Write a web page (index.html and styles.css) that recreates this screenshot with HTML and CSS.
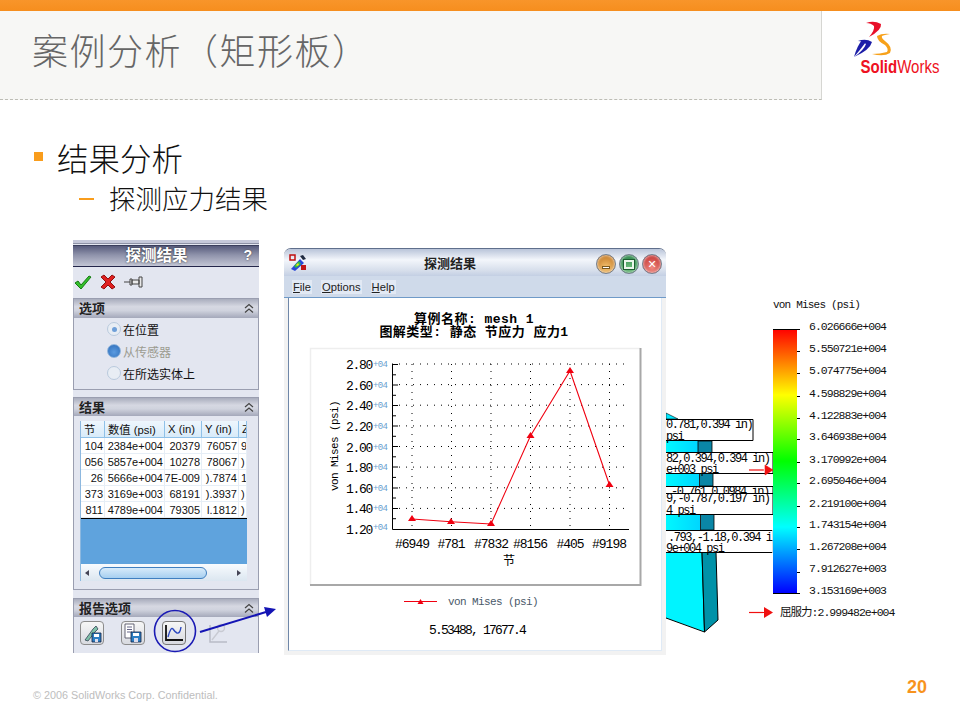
FILE: index.html
```html
<!DOCTYPE html>
<html lang="zh">
<head>
<meta charset="utf-8">
<title>案例分析（矩形板）</title>
<link rel="stylesheet" href="styles.css">
</head>
<body>
<div class="slide">
  <div class="topbar"></div>
  <header class="head">
    <div class="titleband"><h1>案例分析（矩形板）</h1></div>
    <div class="logo">
      <svg width="138" height="88" viewBox="822 11 138 88">
        <path d="M866 23 Q874 20 881 24 Q882 30 869 37 Q875 30 874 26 Q871 23 866 23Z" fill="#e8102a"/>
        <path d="M858 41 Q866 38 872 42 Q870 50 854 57 Q864 50 866 44 Q863 41 858 41Z" fill="#1c1ea8"/>
        <path d="M854 57 Q857 46 862 40 L866 42 Q860 50 854 57Z" fill="#1c1ea8"/>
        <path d="M890 34 Q882 33 877 36 Q877 41 885 45 Q889 49 887 52 Q880 54 872 54 Q884 57 890 53 Q893 47 885 41 Q881 38 882 36 Q884 35 890 34Z" fill="#f7a11a"/>
        <text class="logo-text" x="860.500" y="73" textLength="79" lengthAdjust="spacingAndGlyphs"><tspan class="logo-solid">Solid</tspan>Works</text>
      </svg>
    </div>
  </header>
  <section class="bullets">
    <p class="lvl1"><span class="sq"></span>结果分析</p>
    <p class="lvl2"><span class="dash"></span>探测应力结果</p>
  </section>

  <section class="stage">
    <aside class="panel">
      <div class="tabs"></div>
      <div class="pm-title"><span class="pm-name">探测结果</span><span class="pm-help">?</span></div>
      <div class="pm-actions">
        <svg width="18" height="16" viewBox="0 0 18 16"><path d="M1 9 L4 7 L7 11 L15 2 L17 3 L7 15Z" fill="#35c02c" stroke="#157a12" stroke-width="1"/></svg>
        <svg width="16" height="16" viewBox="0 0 16 16"><path d="M1 3 L4 1 L8 5 L12 1 L15 3 L10 8 L15 13 L12 15 L8 11 L4 15 L1 13 L6 8Z" fill="#e02020" stroke="#901010" stroke-width="1"/></svg>
        <svg class="pin" width="20" height="14" viewBox="0 0 20 14"><path d="M0 7H6M6 4H8V10H6ZM8 5H15V9H8ZM15 2H18V12H15Z" fill="#e9e9e9" stroke="#444" stroke-width="1"/></svg>
      </div>

      <div class="group group-options">
        <div class="group-head"><span>选项</span><svg class="chev" width="10" height="11" viewBox="0 0 10 11"><path d="M1 5 L5 1.500 L9 5M1 9.500 L5 6 L9 9.500" fill="none" stroke="#444" stroke-width="1.200"/></svg></div>
        <div class="radios">
          <div class="radio"><span class="dot dot-on"></span>在位置</div>
          <div class="radio radio-off"><span class="dot dot-blue"></span>从传感器</div>
          <div class="radio"><span class="dot"></span>在所选实体上</div>
        </div>
      </div>

      <div class="group group-results">
        <div class="group-head"><span>结果</span><svg class="chev" width="10" height="11" viewBox="0 0 10 11"><path d="M1 5 L5 1.500 L9 5M1 9.500 L5 6 L9 9.500" fill="none" stroke="#444" stroke-width="1.200"/></svg></div>
        <div class="tbl">
          <div class="grid">
            <div class="th th-c">节</div><div class="th th-l">数值 (psi)</div><div class="th th-l">X (in)</div><div class="th th-l">Y (in)</div><div class="th th-l">Z</div>
            <div class="td">104</div><div class="td">2384e+004</div><div class="td">20379</div><div class="td">76057</div><div class="td td-l">9</div>
            <div class="td">056</div><div class="td">5857e+004</div><div class="td">10278</div><div class="td">78067</div><div class="td td-l">)</div>
            <div class="td">26</div><div class="td">5666e+004</div><div class="td">7E-009</div><div class="td">).7874</div><div class="td td-l">1</div>
            <div class="td">373</div><div class="td">3169e+003</div><div class="td">68191</div><div class="td">).3937</div><div class="td td-l">)</div>
            <div class="td">811</div><div class="td">4789e+004</div><div class="td">79305</div><div class="td">l.1812</div><div class="td td-l">)</div>
          </div>
          <div class="tbl-empty"></div>
          <div class="scroll">
            <span class="arrow-l"></span>
            <span class="thumb"></span>
            <span class="arrow-r"></span>
          </div>
        </div>
      </div>

      <div class="group group-report">
        <div class="group-head"><span>报告选项</span><svg class="chev" width="10" height="11" viewBox="0 0 10 11"><path d="M1 5 L5 1.500 L9 5M1 9.500 L5 6 L9 9.500" fill="none" stroke="#444" stroke-width="1.200"/></svg></div>
        <div class="report-btns">
          <button class="tool"><svg width="20" height="20" viewBox="0 0 20 20"><path d="M3 17 L11 6 L14 3 L16 6 L13 9 L6 18Z" fill="#7fc0a8" stroke="#345" stroke-width=".8"/><path d="M10 10H19V19H10Z" fill="#2c7fc4" stroke="#124" stroke-width=".8"/><path d="M12 11H17V14H12Z" fill="#fff"/><path d="M13 16H16V19H13Z" fill="#dde"/></svg></button>
          <button class="tool"><svg width="20" height="20" viewBox="0 0 20 20"><path d="M2 1H11V15H2Z" fill="#fff" stroke="#556" stroke-width=".9"/><path d="M4 4H9M4 6.500H9M4 9H9" stroke="#668" stroke-width="1"/><path d="M8 9H18V19H8Z" fill="#2c7fc4" stroke="#124" stroke-width=".8"/><path d="M10 10H16V13H10Z" fill="#fff"/><path d="M11 15H15V19H11Z" fill="#dde"/></svg></button>
          <button class="tool tool-on"><svg width="20" height="20" viewBox="0 0 20 20"><path d="M2 2V17H19" fill="none" stroke="#111" stroke-width="1.800"/><path d="M4 14 Q7 3 9 6 T13 10 Q16 11 17 4" fill="none" stroke="#2d49c0" stroke-width="1.400"/></svg></button>
          <svg class="tool-dim" width="20" height="22" viewBox="0 0 20 22"><path d="M2 3V20H19" fill="none" stroke="#b9bcc6" stroke-width="1.500"/><path d="M4 18 L11 9" stroke="#c8cad2" stroke-width="1.400"/><circle cx="13" cy="6" r="3.500" fill="none" stroke="#c8cad2" stroke-width="1.400"/></svg>
        </div>
      </div>
    </aside>

    <svg class="callout" width="290" height="440" viewBox="0 240 290 440">
      <circle cx="175" cy="631" r="20.500" fill="none" stroke="#1a1ab4" stroke-width="1.600"/>
      <path d="M200 632 L266 612" stroke="#1414b4" stroke-width="2"/>
      <path d="M276 609 L264 607 L267 617Z" fill="#1414b4"/>
    </svg>

    <article class="win">
      <div class="win-title">
        <svg class="win-icon" width="18" height="18" viewBox="0 0 18 18"><rect x="1" y="1" width="5" height="5" fill="none" stroke="#c01010" stroke-width="1.500"/><path d="M2 15 L11 5 L15 9 L6 17Z" fill="#2a48d8"/><path d="M5 12 L10 7 L12 10 L7 14Z" fill="#30c040"/><path d="M7 11 L9 9 L10 11 L8 12Z" fill="#f0e020"/><path d="M11 2 L14 1 L17 5 L14 6Z" fill="#202a40"/><rect x="12" y="11" width="5" height="5" fill="#c01818"/></svg>
        <span class="win-name">探测结果</span>
        <div class="win-btns">
          <span class="wb wb-min"><i></i></span>
          <span class="wb wb-max"><i></i></span>
          <span class="wb wb-close"><i>✕</i></span>
        </div>
      </div>
      <nav class="win-menu">
        <span><u>F</u>ile</span><span><u>O</u>ptions</span><span><u>H</u>elp</span>
      </nav>
      <div class="win-body">
        <svg width="373" height="352" viewBox="289 299 373 352">
          <text class="t-title" x="474" y="323.500" text-anchor="middle">算例名称: mesh 1</text>
          <text class="t-title" x="474" y="337" text-anchor="middle">图解类型: 静态 节应力 应力1</text>
          <path d="M310.500 586V349.500H640" fill="none" stroke="#eee" stroke-width="1.500"/>
          <path d="M640.500 349V586H310" fill="none" stroke="#a8a8a8" stroke-width="2"/>
          <g class="grid-dots">
            <path d="M392 365H628M392 385.600H628M392 406.200H628M392 426.900H628M392 447.500H628M392 468.100H628M392 488.800H628M392 509.400H628"/>
            <path d="M412 365V530M451.500 365V530M491 365V530M530.500 365V530M570 365V530M609.500 365V530"/>
          </g>
          <path d="M392.500 365V530.500H629" fill="none" stroke="#000"/>
          <path d="M392 365.500H398M392 375.800H396M392 386H398M392 396.300H396M392 406.500H398M392 416.800H396M392 427H398M392 437.300H396M392 447.500H398M392 457.800H396M392 468H398M392 478.400H396M392 489H398M392 499H396M392 509.500H398M392 519.700H396" stroke="#000"/>
          <g class="t-y">
            <text x="346" y="370">2.80</text><text x="346" y="390.600">2.60</text><text x="346" y="411.200">2.40</text><text x="346" y="431.900">2.20</text><text x="346" y="452.500">2.00</text><text x="346" y="473.100">1.80</text><text x="346" y="493.800">1.60</text><text x="346" y="514.400">1.40</text><text x="346" y="535">1.20</text>
          </g>
          <g class="t-exp">
            <text x="373" y="368">+04</text><text x="373" y="388.600">+04</text><text x="373" y="409.200">+04</text><text x="373" y="429.900">+04</text><text x="373" y="450.500">+04</text><text x="373" y="471.100">+04</text><text x="373" y="491.800">+04</text><text x="373" y="512.400">+04</text><text x="373" y="531">+04</text>
          </g>
          <g class="t-x" text-anchor="middle">
            <text x="412" y="549">#6949</text><text x="451" y="549">#781</text><text x="491" y="549">#7832</text><text x="530" y="549">#8156</text><text x="570" y="549">#405</text><text x="609" y="549">#9198</text>
          </g>
          <text class="t-cjk" x="509" y="566" text-anchor="middle">节</text>
          <text class="t-ylab" transform="translate(338 492) rotate(-90)">von Mises (psi)</text>
          <path d="M412 520 L451 522.700 L491 525 L530.500 436.700 L570 371.700 L609.500 486" fill="none" stroke="#f00010" stroke-width="1.100"/>
          <g fill="#f00010">
            <path d="M412 516L416 522H408Z"/><path d="M451 519L455 525H447Z"/><path d="M491 521L495 527H487Z"/><path d="M530.500 433L534.500 439H526.500Z"/><path d="M570 368L574 374H566Z"/><path d="M609.500 482L613.500 488H605.500Z"/>
          </g>
          <path d="M404 602.500H437" stroke="#f00010" stroke-width="1.200"/>
          <path d="M420.500 600L423.500 605H417.500Z" fill="#f00010"/>
          <text class="t-leg" x="448" y="606">von Mises (psi)</text>
          <text class="t-read" x="429" y="635">5.53488, 17677.4</text>
        </svg>
      </div>
    </article>

    <svg class="model" width="234" height="350" viewBox="666 290 234 350">
      <defs>
        <linearGradient id="cy" x1="0" x2="1" y1="0" y2="0"><stop offset="0" stop-color="#00f8ff"/><stop offset="1" stop-color="#00d6ff"/></linearGradient>
        <linearGradient id="bar" x1="0" x2="0" y1="0" y2="1">
          <stop offset="0" stop-color="#ff0000"/><stop offset=".25" stop-color="#ffff00"/><stop offset=".5" stop-color="#00ff00"/><stop offset=".75" stop-color="#00ffff"/><stop offset="1" stop-color="#0000ff"/>
        </linearGradient>
      </defs>
      <path d="M666 413L678 419H666Z" fill="#00e8ff" stroke="#000" stroke-width=".6"/>
      <rect x="666" y="441" width="32" height="12" fill="url(#cy)"/><path d="M698 441H712V453H698Z" fill="#0a86a6" stroke="#000" stroke-width=".8"/>
      <rect x="666" y="473" width="33" height="13" fill="url(#cy)"/><path d="M699.500 473H713V486H699.500Z" fill="#0a86a6" stroke="#000" stroke-width=".8"/>
      <rect x="666" y="514" width="34" height="16" fill="url(#cy)"/><path d="M700.500 514H714V530H700.500Z" fill="#0a86a6" stroke="#000" stroke-width=".8"/>
      <path d="M666 552H702L705 632L666 618Z" fill="#00f4ff"/>
      <path d="M666 618L704.500 632L702 552" fill="none" stroke="#000" stroke-width="1"/>
      <path d="M702 552H716L718 620L704.500 632Z" fill="#0092a8" stroke="#000" stroke-width="1"/>

      <g class="lab-box">
        <path d="M666 419.500H753V440.500H666"/>
        <path d="M666 452.500H773V473.500H666"/>
        <path d="M666 486.500H773V494H666"/>
      </g>
      <g class="t-lab"><text x="671" y="495">-0.761,0.0984 in)</text></g>
      <g class="lab-box">
        <path d="M666 493.500H773V514.500H666"/>
        <path d="M666 530.500H773V552.500H666"/>
      </g>
      <path d="M773 530V553" stroke="#fff" stroke-width="1.500"/>
      <g class="t-lab">
        <text x="666" y="428">0.781,0.394 in)</text><text x="666" y="440">psi</text>
        <text x="666" y="462">82,0.394,0.394 in)</text><text x="666" y="473">e+003 psi</text>
        <text x="666" y="502">9,-0.787,0.197 in)</text><text x="666" y="514">4 psi</text>
        <text x="668" y="541">.793,-1.18,0.394 i</text><text x="666" y="552">9e+004 psi</text>
      </g>
      <path d="M749 470H764" stroke="#f01010" stroke-width="1.200"/><path d="M765 465L773 470L765 475Z" fill="#f01010" stroke="#f01010" stroke-width=".6"/>

      <text class="t-leg2" x="773" y="308">von Mises (psi)</text>
      <rect x="773" y="329" width="24" height="264" fill="url(#bar)"/>
      <path d="M773 329.500H800M773 593.500H800M797 351.500H800M797 373.500H800M797 396.500H800M797 418.500H800M797 439.500H800M797 462.500H800M797 483.500H800M797 506.500H800M797 527.500H800M797 549.500H800M797 572.500H800" stroke="#000"/>
      <g class="t-scale">
        <text x="809" y="330">6.026666e+004</text><text x="809" y="352">5.550721e+004</text><text x="809" y="374">5.074775e+004</text><text x="809" y="397">4.598829e+004</text><text x="809" y="419">4.122883e+004</text><text x="809" y="440">3.646938e+004</text><text x="809" y="463">3.170992e+004</text><text x="809" y="484">2.695046e+004</text><text x="809" y="507">2.219100e+004</text><text x="809" y="528">1.743154e+004</text><text x="809" y="550">1.267208e+004</text><text x="809" y="572">7.912627e+003</text><text x="809" y="594">3.153169e+003</text>
      </g>
      <path d="M749 612.500H764" stroke="#f01010" stroke-width="1.200"/><path d="M764 607L773 612.500L764 618Z" fill="#f01010"/>
      <text class="t-yield" x="780" y="616">屈服力:2.999482e+004</text>
    </svg>
  </section>

  <footer class="foot">
    <span class="copy">© 2006 SolidWorks Corp. Confidential.</span>
    <span class="page">20</span>
  </footer>
</div>
</body>
</html>
```

FILE: styles.css
```css
* { box-sizing: border-box; }
html, body { margin: 0; padding: 0; background: #fff; }
.slide {
  width: 960px; height: 720px; overflow: hidden; position: relative;
  font-family: "Noto Sans CJK SC", "Liberation Sans", sans-serif; background: #fff;
}
.topbar { height: 11px; background: linear-gradient(#f8952a, #f68e1e); }
.head { display: flex; height: 89px; }
.titleband {
  width: 822px; background: #f7f7f5; border-right: 1px solid #d6d6d2;
  border-bottom: 1px dashed #bdbdb5; padding-left: 32px;
}
.titleband h1 {
  margin: 0; font-size: 36px; font-weight: 300; color: #666; line-height: 77px;
  letter-spacing: 1.500px; white-space: nowrap; text-spacing-trim: space-all;
}
.logo { width: 138px; height: 88px; }
.logo svg { display: block; }
.logo-text { font: 19px "Liberation Sans", sans-serif; fill: #ee1122; }
.logo-solid { font-weight: 700; }

.bullets { height: 140px; padding-top: 36px; color: #111; }
.bullets p { margin: 0; display: flex; align-items: center; white-space: nowrap; }
.lvl1 { font-size: 31.500px; height: 41px; padding-left: 34px; font-weight: 300; }
.lvl2 { font-size: 26.500px; height: 40px; padding-left: 79px; font-weight: 300; }
.sq { width: 9px; height: 9px; background: #f99d1c; margin-right: 14px; flex: none; }
.dash { width: 15px; height: 2px; background: #f99d1c; margin: 4px 15px 0 0; flex: none; }

.stage { position: relative; height: 440px; }

/* property manager panel */
.panel {
  position: absolute; left: 73px; top: 0; width: 186px; height: 413px;
  background: #e3e6f0; display: flex; flex-direction: column; overflow: hidden;
  font-family: "Noto Sans CJK SC", sans-serif;
}
.tabs { height: 4px; flex: none; background: #c6c9da; border-bottom: 1px solid #8e92a6; }
.pm-title {
  height: 22px; flex: none; margin-top: 1px; padding-bottom: 3px; display: flex; align-items: center; justify-content: center; position: relative;
  background: linear-gradient(#575b7c, #8f93ab 45%, #c2c5d4);
  border-top: 1px solid #3a3e5c; border-bottom: 1px solid #23264a;
  color: #fff; font-weight: 700; font-size: 15.500px;
}
.pm-name { text-shadow: 0 0 2px #222; margin-right: 19px; line-height: 1; }
.pm-help { position: absolute; right: 7px; top: 1px; font: bold 14px "Liberation Sans", sans-serif; color: #fff; text-shadow: 0 0 2px #444; }
.pm-actions { height: 31px; flex: none; display: flex; align-items: center; gap: 8px; padding-left: 1px; }
.pm-actions svg { margin-top: -2px; }
.group { border: 1px solid #9a9eb0; display: flex; flex-direction: column; flex: none; }
.group-head {
  height: 19px; flex: none; display: flex; align-items: center; justify-content: space-between; padding: 0 4px 0 5px;
  background: linear-gradient(#a9adbd, #d6d8e2 40%, #d0d3de 60%, #a4a8ba);
  font-size: 13px; font-weight: 700; color: #222;
}
.group-head span { margin-top: -2px; }
.chev { flex: none; }
.group-options { height: 92px; }
.radios { padding: 0 0 0 33px; display: flex; flex-direction: column; }
.radio { height: 22px; display: flex; align-items: center; gap: 2px; font-size: 12px; color: #111; white-space: nowrap; }
.radio-off { color: #9c9c90; }
.dot { width: 14px; height: 14px; border-radius: 50%; background: #e8edf4; border: 1px solid #b9cadd; flex: none; display: flex; align-items: center; justify-content: center; }
.dot-on::after { content: ""; width: 5px; height: 5px; border-radius: 50%; background: #6f9fd8; }
.dot-blue { background: radial-gradient(circle at 50% 60%, #5b9be0, #2d6cb8); border-color: #8fb4dc; }
.group-results { height: 193px; margin-top: 7px; }
.group-results .group-head { height: 18px; }
.tbl { margin: 5px 12px 0 6px; width: 167px; height: 160px; display: flex; flex-direction: column; border-left: 1px solid #8db8df; background: #fff; }
.grid { flex: none; display: grid; grid-template-columns: 24px 60px 37px 37px 8px; grid-template-rows: 17px repeat(5, 16px); font: 11px "Liberation Sans", sans-serif; color: #111; border-bottom: 1px solid #000; }
.th { background: linear-gradient(#eef6fd, #d8ebf9); border-right: 1px solid #8fc1e8; border-bottom: 1px solid #8fc1e8; display: flex; align-items: center; overflow: hidden; white-space: nowrap; font-size: 11.300px; padding-left: 3px; font-family: "Liberation Sans", "Noto Sans CJK SC", sans-serif; }
.th-c { font-family: "Noto Sans CJK SC", sans-serif; }
.td { background: #fff; border-right: 1px solid #e6eef6; border-bottom: 1px solid #e6eef6; display: flex; align-items: center; justify-content: flex-end; overflow: hidden; white-space: nowrap; padding-right: 1px; }
.td-l { justify-content: flex-start; padding-left: 2px; }
.tbl-empty { flex: 1; background: #5fa3dd; }
.scroll { height: 17px; flex: none; background: linear-gradient(#f8fbfe, #dbe6f0); display: flex; align-items: center; padding: 0 6px 0 4px; position: relative; }
.arrow-l { width: 4px; height: 6px; border: 3px solid transparent; border-right: 4px solid #445; border-left: 0; flex: none; }
.thumb { flex: none; width: 108px; height: 12px; border-radius: 6px; border: 1px solid #3f7fc0; background: linear-gradient(#d8ebfa, #a6cff0); margin-left: 10px; }
.arrow-r { width: 4px; height: 6px; border: 3px solid transparent; border-left: 4px solid #445; border-right: 0; margin-left: auto; flex: none; }
.group-report { height: 60px; margin-top: 8px; border-bottom: 0; }
.group-report .group-head { height: 18px; }
.report-btns { display: flex; align-items: center; padding: 4px 0 0 6px; gap: 17px; }
.tool { width: 24px; height: 24px; padding: 0; border: 1px solid #8c8c8c; border-radius: 4px; background: linear-gradient(#f6f6f6, #d8dae0); display: flex; align-items: center; justify-content: center; }
.tool-on { border-color: #777; }
.tool-dim { margin-left: 5px; }

.callout { position: absolute; left: 0; top: 0; pointer-events: none; z-index: 2; }

/* window */
.win {
  position: absolute; left: 284px; top: 8px; width: 382px; height: 407px;
  background: #f2f2f2; border-radius: 7px 7px 0 0; display: flex; flex-direction: column;
  border-top: 1px solid #5f6f8c;
}
.win-title {
  height: 27px; flex: none; display: flex; align-items: center; position: relative; padding-left: 5px;
  background: linear-gradient(#b9c4d9, #f3f6fb 40%, #d6deeb 80%, #c3cfe3);
  border-radius: 7px 7px 0 0;
}
.win-icon { flex: none; }
.win-name { position: absolute; left: 140px; top: 4px; font-size: 13px; font-weight: 700; color: #222; }
.win-btns { position: absolute; right: 4px; top: 5px; display: flex; gap: 3px; }
.wb { width: 20px; height: 20px; border-radius: 50%; border: 1px solid #76808e; display: flex; align-items: center; justify-content: center; box-shadow: inset 0 0 3px #fff; }
.wb i { font-style: normal; color: #fff; font-size: 11px; line-height: 1; font-family: "DejaVu Sans", sans-serif; font-weight: 700; }
.wb-min { background: radial-gradient(circle at 50% 70%, #f4c270, #b96a16); }
.wb-min i { width: 8px; height: 3px; background: #fff; margin-top: 6px; border: 1px solid #7a5a20; }
.wb-max { background: radial-gradient(circle at 50% 70%, #6fbf7c, #16743a); }
.wb-max i { width: 10px; height: 9px; border: 2px solid #eaf6ea; outline: 1px solid #1c5e30; }
.wb-close { background: radial-gradient(circle at 50% 70%, #f08a80, #b81e1e); }
.win-menu {
  height: 22px; flex: none; display: flex; align-items: center; padding-left: 8px; gap: 9px;
  background: #cfdaea; font: 11.200px "Liberation Sans", sans-serif; color: #222;
  border-bottom: 1px solid #6f9ac8;
}
.win-menu span { background: #e2e9f4; padding: 1px; }
.win-body {
  margin: 0 4px 4px 4px; flex: 1; background: #fff;
  border-left: 1px solid #6f87a8; border-right: 1px solid #dfeaf6; border-bottom: 1px solid #dfeaf6;
  overflow: hidden;
}
.win-body svg { display: block; }
.t-title { font: bold 13px "Liberation Mono", "Noto Sans CJK SC", monospace; letter-spacing: .45px; fill: #000; }
.grid-dots path { fill: none; stroke: #000; stroke-width: 1; stroke-dasharray: 1 6; }
.t-y text { font: 13px "Liberation Mono", monospace; letter-spacing: -1.300px; fill: #000; }
.t-exp text { font: 9px "Liberation Mono", monospace; fill: #6a9fd0; letter-spacing: -.7px; }
.t-x text { font: 13px "Liberation Mono", monospace; letter-spacing: -1px; fill: #000; }
.t-cjk { font: 12px "Noto Sans CJK SC", sans-serif; fill: #000; }
.t-ylab { font: 11px "Liberation Mono", monospace; letter-spacing: -.6px; fill: #000; }
.t-leg { font: 11px "Liberation Mono", monospace; letter-spacing: -.6px; fill: #4a5a6a; }
.t-read { font: 13px "Liberation Mono", monospace; letter-spacing: -1.800px; fill: #000; }

/* model and scale */
.model { position: absolute; left: 666px; top: 50px; }
.lab-box path { fill: #fff; stroke: #000; stroke-width: 1; }
.t-lab text { font: 12px "Liberation Mono", monospace; letter-spacing: -1.450px; fill: #000; }
.t-leg2 { font: 11px "Liberation Mono", monospace; letter-spacing: -.8px; fill: #111; }
.t-scale text { font: 11.500px "Liberation Mono", monospace; letter-spacing: -.98px; fill: #111; }
.t-yield { font: 11.500px "Liberation Mono", "Noto Sans CJK SC", monospace; letter-spacing: -.98px; fill: #111; }

.foot { height: 40px; position: relative; display: flex; justify-content: space-between; padding: 9px 33px 0 33px; }
.copy { font: 10.800px/12px "Liberation Sans", sans-serif; color: #bdbdbd; }
.page { font: bold 18px/18px "Liberation Sans", sans-serif; color: #f7931e; margin-top: -11px; }
```
